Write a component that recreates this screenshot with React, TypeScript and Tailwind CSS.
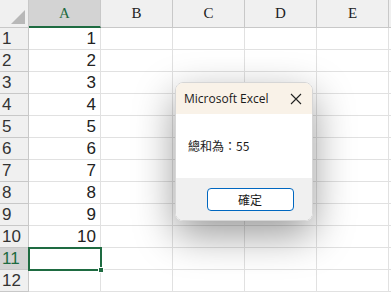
import React from 'react';

const cols = ['A', 'B', 'C', 'D', 'E', ''];
const rows = Array.from({ length: 12 }, (_, i) => i + 1);

export default function App() {
  return (
    <div className="relative w-[391px] h-[293px] overflow-hidden bg-white font-['Liberation_Sans',sans-serif]">
      <div className="grid grid-cols-[29px_72px_72px_72px_72px_72px_72px] grid-rows-[28px_repeat(12,22px)]">
        {/* corner */}
        <div className="relative bg-[#f0f0f0] border-r border-b border-[#c8c8c8]">
          <div className="absolute right-[3px] bottom-[3px] w-0 h-0 border-l-[14px] border-l-transparent border-b-[14px] border-b-[#b8b8b8]" />
        </div>
        {cols.map((c, i) => (
          <div
            key={c + i}
            className={`flex items-center justify-center border-r font-['Liberation_Serif',serif] text-[15px] ${
              i === 0
                ? 'bg-[#d3d3d3] text-[#1e6b41] border-b-2 border-b-[#1e6b41] border-r-[#c8c8c8]'
                : 'bg-[#f0f0f0] text-[#222] border-b border-[#c8c8c8]'
            }`}
          >
            {c}
          </div>
        ))}
        {rows.map(r => (
          <React.Fragment key={r}>
            <div
              className={`flex items-center justify-start pl-[2px] border-r border-b text-[17px] ${
                r === 11
                  ? 'bg-[#d3d3d3] text-[#1e6b41] border-r-[#1e6b41] border-b-[#c8c8c8]'
                  : 'bg-[#f0f0f0] text-[#333] border-[#c8c8c8]'
              }`}
            >
              {r}
            </div>
            <div className="flex items-center justify-end pr-[4px] border-r border-b border-[#e1e1e1] text-[17px] text-[#222]">
              {r <= 10 ? r : ''}
            </div>
            {[0, 1, 2, 3, 4].map(k => (
              <div key={k} className="border-r border-b border-[#e1e1e1]" />
            ))}
          </React.Fragment>
        ))}
      </div>

      {/* selected cell A11 */}
      <div className="absolute left-[28px] top-[247px] w-[74px] h-[24px] border-2 border-[#1e6b41]">
        <div className="absolute -right-[4px] -bottom-[4px] w-[6px] h-[6px] bg-[#1e6b41] border border-white" />
      </div>

      {/* dialog */}
      <div className="absolute left-[175px] top-[82px] w-[138px] h-[139px] rounded-[8px] overflow-hidden border border-[#d6d6d6] shadow-[0_14px_40px_rgba(0,0,0,0.4)] flex flex-col font-['Open_Sans','Noto_Sans_CJK_TC',sans-serif]">
        <div className="h-[31px] bg-[#f9f2e8] flex items-center justify-between pl-[8px] pr-[8px]">
          <span className="text-[12px] text-[#1a1a1a]">Microsoft Excel</span>
          <svg width="12" height="12" viewBox="0 0 12 12" className="mr-[2px]">
            <path d="M1 1L11 11M11 1L1 11" stroke="#222" strokeWidth="1.1" fill="none" />
          </svg>
        </div>
        <div className="h-[64px] bg-white flex items-center pl-[12px]">
          <span className="text-[12px] text-[#1a1a1a] font-['Noto_Sans_CJK_TC',sans-serif]">總和為：55</span>
        </div>
        <div className="flex-1 bg-[#f0f0f0] flex items-start justify-center pt-[10px]">
          <button className="w-[87px] h-[23px] ml-[12px] rounded-[4px] bg-white border border-[#0067c0] text-[12px] text-[#1a1a1a] font-['Noto_Sans_CJK_TC',sans-serif] flex items-center justify-center">
            確定
          </button>
        </div>
      </div>
    </div>
  );
}
